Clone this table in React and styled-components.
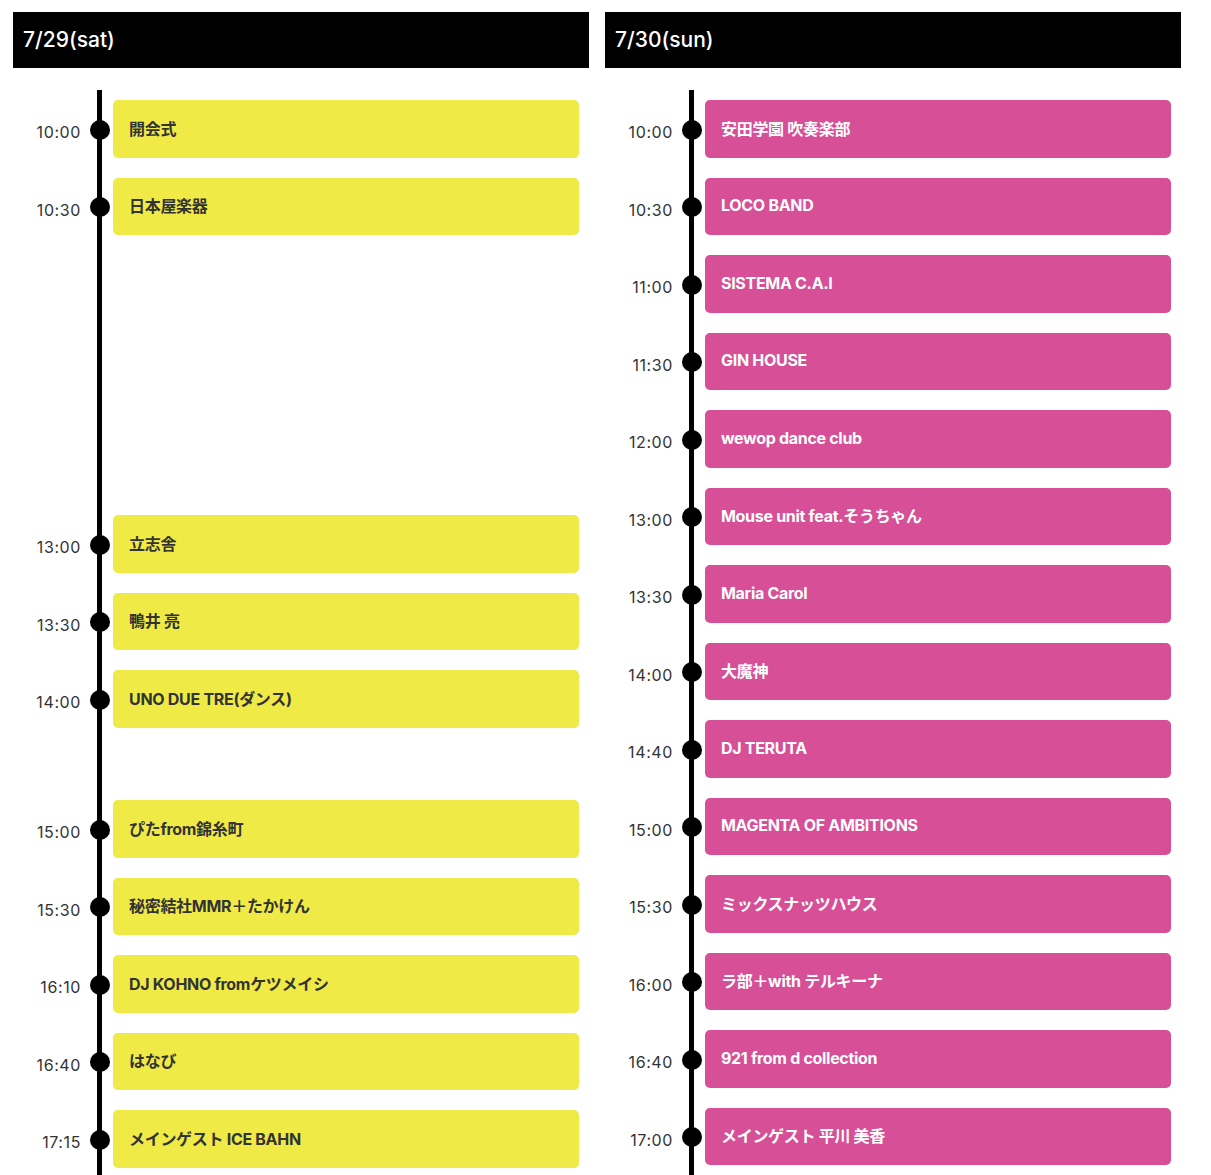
import styled, { createGlobalStyle } from "styled-components";

const GlobalStyle = createGlobalStyle`
  body {
    margin: 0;
    background: #ffffff;
    font-family: "Inter", "Noto Sans CJK JP", sans-serif;
  }
`;

const sat = [
  { time: "10:00", name: "開会式" },
  { time: "10:30", name: "日本屋楽器" },
  { time: "13:00", name: "立志舎", space: 260 },
  { time: "13:30", name: "鴨井 亮" },
  { time: "14:00", name: "UNO DUE TRE(ダンス)" },
  { time: "15:00", name: "ぴたfrom錦糸町", space: 52.5 },
  { time: "15:30", name: "秘密結社MMR＋たかけん" },
  { time: "16:10", name: "DJ KOHNO fromケツメイシ" },
  { time: "16:40", name: "はなび" },
  { time: "17:15", name: "メインゲスト ICE BAHN" },
];

const sun = [
  { time: "10:00", name: "安田学園 吹奏楽部" },
  { time: "10:30", name: "LOCO BAND" },
  { time: "11:00", name: "SISTEMA C.A.I" },
  { time: "11:30", name: "GIN HOUSE" },
  { time: "12:00", name: "wewop dance club" },
  { time: "13:00", name: "Mouse unit feat.そうちゃん" },
  { time: "13:30", name: "Maria Carol" },
  { time: "14:00", name: "大魔神" },
  { time: "14:40", name: "DJ TERUTA" },
  { time: "15:00", name: "MAGENTA OF AMBITIONS" },
  { time: "15:30", name: "ミックスナッツハウス" },
  { time: "16:00", name: "ラ部＋with テルキーナ" },
  { time: "16:40", name: "921 from d collection" },
  { time: "17:00", name: "メインゲスト 平川 美香" },
];

const days = [
  { label: "7/29(sat)", items: sat, tone: "yellow" },
  { label: "7/30(sun)", items: sun, tone: "pink" },
];

const App = () => {
  return (
    <>
      <GlobalStyle />
      <Page>
        {days.map((day) => (
          <Column key={day.label}>
            <DayHeader>{day.label}</DayHeader>
            <Timeline>
              {day.items.map((item) => (
                <Row key={item.time} $space={item.space || 0}>
                  <Time>{item.time}</Time>
                  <Dot />
                  <Card $tone={day.tone}>{item.name}</Card>
                </Row>
              ))}
            </Timeline>
          </Column>
        ))}
      </Page>
    </>
  );
};

export default App;

const Page = styled.div`
  display: grid;
  grid-template-columns: 576px 576px;
  gap: 16px;
  padding: 12px 0 0 13px;
  height: 1175px;
  box-sizing: border-box;
  overflow: hidden;
`;

const Column = styled.div`
  display: flex;
  flex-direction: column;
`;

const DayHeader = styled.div`
  height: 56px;
  background: #000000;
  color: #ffffff;
  display: flex;
  align-items: center;
  padding-left: 10px;
  padding-bottom: 1px;
  box-sizing: border-box;
  font-size: 21px;
  font-weight: 500;
`;

const Timeline = styled.div`
  position: relative;
  display: flex;
  flex-direction: column;
  gap: 20px;
  margin-top: 22px;
  padding: 10px 0 40px;
  flex: 1;

  &::before {
    content: "";
    position: absolute;
    left: 84px;
    top: 0;
    bottom: 0;
    width: 5px;
    background: #000000;
  }
`;

const Row = styled.div`
  position: relative;
  display: grid;
  grid-template-columns: 68px 32px 466px;
  flex: 0 0 57.5px;
  margin-top: ${({ $space }) => $space}px;
`;

const Time = styled.div`
  grid-column: 1;
  align-self: center;
  text-align: right;
  padding-top: 7px;
  font-size: 16px;
  color: #333333;
  letter-spacing: 0.6px;
`;

const Dot = styled.span`
  position: absolute;
  left: 77px;
  top: 50%;
  width: 20px;
  height: 20px;
  margin-top: -9px;
  border-radius: 50%;
  background: #000000;
`;

const Card = styled.div`
  grid-column: 3;
  display: flex;
  align-items: center;
  padding-left: 16px;
  padding-bottom: 2px;
  border-radius: 5px;
  font-size: 16px;
  font-weight: 700;
  letter-spacing: -0.3px;
  background: ${({ $tone }) => ($tone === "pink" ? "#d64f97" : "#f0ea46")};
  color: ${({ $tone }) => ($tone === "pink" ? "#ffffff" : "#333333")};
`;
